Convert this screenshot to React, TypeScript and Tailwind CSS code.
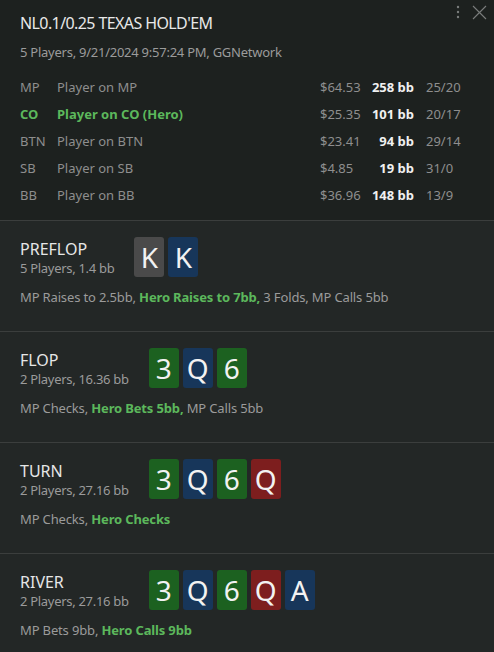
import React from "react";

type Card = { r: string; c: "gray" | "blue" | "green" | "red" };

const cardBg: Record<string, string> = {
  gray: "bg-[#4a4a4a]",
  blue: "bg-[#17365a]",
  green: "bg-[#1c6120]",
  red: "bg-[#7d1e1e]",
};

function CardView({ card }: { card: Card }) {
  return (
    <div
      className={`w-[30px] h-[40px] rounded-[3px] flex items-center justify-center text-[28px] leading-none text-[#f2f2f2] ${cardBg[card.c]}`}
    >
      {card.r}
    </div>
  );
}

type Part = { t: string; hero?: boolean };

function Street({
  name,
  sub,
  cards,
  actions,
  last,
}: {
  name: string;
  sub: string;
  cards: Card[];
  actions: Part[];
  last?: boolean;
}) {
  return (
    <div
      className={`bg-[#232726] pl-5 pt-4 ${last ? "h-[98px]" : "h-[111px] border-b border-[#3b3e3d]"}`}
    >
      <div className="flex items-center gap-5">
        <div className="flex flex-col pt-[2px]">
          <div className="text-[16px] leading-[20px] text-[#e6e6e6]">{name}</div>
          <div className="text-[13px] leading-[18px] tracking-[-0.3px] text-[#9b9b9b]">{sub}</div>
        </div>
        <div className="flex gap-1">
          {cards.map((c, i) => (
            <CardView key={i} card={c} />
          ))}
        </div>
      </div>
      <div className="mt-[11px] text-[13px] leading-[18px] tracking-[-0.15px] text-[#9b9b9b]">
        {actions.map((p, i) => (
          <span key={i} className={p.hero ? "font-bold text-[#5cb85c]" : ""}>
            {p.t}
          </span>
        ))}
      </div>
    </div>
  );
}

const players = [
  { pos: "MP", name: "Player on MP", usd: "$64.53", bb: "258 bb", st: "25/20" },
  { pos: "CO", name: "Player on CO (Hero)", usd: "$25.35", bb: "101 bb", st: "20/17", hero: true },
  { pos: "BTN", name: "Player on BTN", usd: "$23.41", bb: "94 bb", st: "29/14" },
  { pos: "SB", name: "Player on SB", usd: "$4.85", bb: "19 bb", st: "31/0" },
  { pos: "BB", name: "Player on BB", usd: "$36.96", bb: "148 bb", st: "13/9" },
];

export default function App() {
  return (
    <div
      className="w-[494px] h-[652px] overflow-hidden bg-[#1d211f] flex flex-col"
      style={{ fontFamily: '"Noto Sans", "Open Sans", sans-serif' }}
    >
      <div className="relative h-[221px] border-b border-[#3b3e3d] pl-5 pt-[11px]">
        <div className="absolute right-[7px] top-[4px] flex items-center gap-[12px] text-[#7a7d7c]">
          <svg width="4" height="16" viewBox="0 0 4 16">
            <circle cx="2" cy="3" r="1.2" fill="currentColor" />
            <circle cx="2" cy="8" r="1.2" fill="currentColor" />
            <circle cx="2" cy="13" r="1.2" fill="currentColor" />
          </svg>
          <svg width="15" height="15" viewBox="0 0 15 15">
            <path d="M1 1 L14 14 M14 1 L1 14" stroke="currentColor" strokeWidth="1.1" />
          </svg>
        </div>
        <div className="text-[16px] leading-[24px] tracking-[-0.6px] text-[#e8e8e8]">NL0.1/0.25 TEXAS HOLD'EM</div>
        <div className="mt-[8px] text-[13px] leading-[18px] tracking-[-0.25px] text-[#9b9b9b]">
          5 Players, 9/21/2024 9:57:24 PM, GGNetwork
        </div>
        <div className="mt-[13px] flex flex-col">
          {players.map((p) => (
            <div
              key={p.pos}
              className={`flex items-center h-[27px] text-[13px] ${p.hero ? "text-[#5cb85c] font-bold" : "text-[#8e8e8e]"}`}
            >
              <div className="w-[37px]">{p.pos}</div>
              <div className="w-[263px]">{p.name}</div>
              <div className={`w-[50px] ${p.hero ? "font-normal text-[#8e8e8e]" : ""}`}>{p.usd}</div>
              <div className="w-[44px] text-right font-bold text-[#f0f0f0]">{p.bb}</div>
              <div className={`ml-[12px] ${p.hero ? "font-normal text-[#8e8e8e]" : ""}`}>{p.st}</div>
            </div>
          ))}
        </div>
      </div>
      <Street
        name="PREFLOP"
        sub="5 Players, 1.4 bb"
        cards={[
          { r: "K", c: "gray" },
          { r: "K", c: "blue" },
        ]}
        actions={[
          { t: "MP Raises to 2.5bb, " },
          { t: "Hero Raises to 7bb,", hero: true },
          { t: " 3 Folds, MP Calls 5bb" },
        ]}
      />
      <Street
        name="FLOP"
        sub="2 Players, 16.36 bb"
        cards={[
          { r: "3", c: "green" },
          { r: "Q", c: "blue" },
          { r: "6", c: "green" },
        ]}
        actions={[
          { t: "MP Checks, " },
          { t: "Hero Bets 5bb,", hero: true },
          { t: " MP Calls 5bb" },
        ]}
      />
      <Street
        name="TURN"
        sub="2 Players, 27.16 bb"
        cards={[
          { r: "3", c: "green" },
          { r: "Q", c: "blue" },
          { r: "6", c: "green" },
          { r: "Q", c: "red" },
        ]}
        actions={[{ t: "MP Checks, " }, { t: "Hero Checks", hero: true }]}
      />
      <Street
        name="RIVER"
        sub="2 Players, 27.16 bb"
        last
        cards={[
          { r: "3", c: "green" },
          { r: "Q", c: "blue" },
          { r: "6", c: "green" },
          { r: "Q", c: "red" },
          { r: "A", c: "blue" },
        ]}
        actions={[{ t: "MP Bets 9bb, " }, { t: "Hero Calls 9bb", hero: true }]}
      />
    </div>
  );
}
